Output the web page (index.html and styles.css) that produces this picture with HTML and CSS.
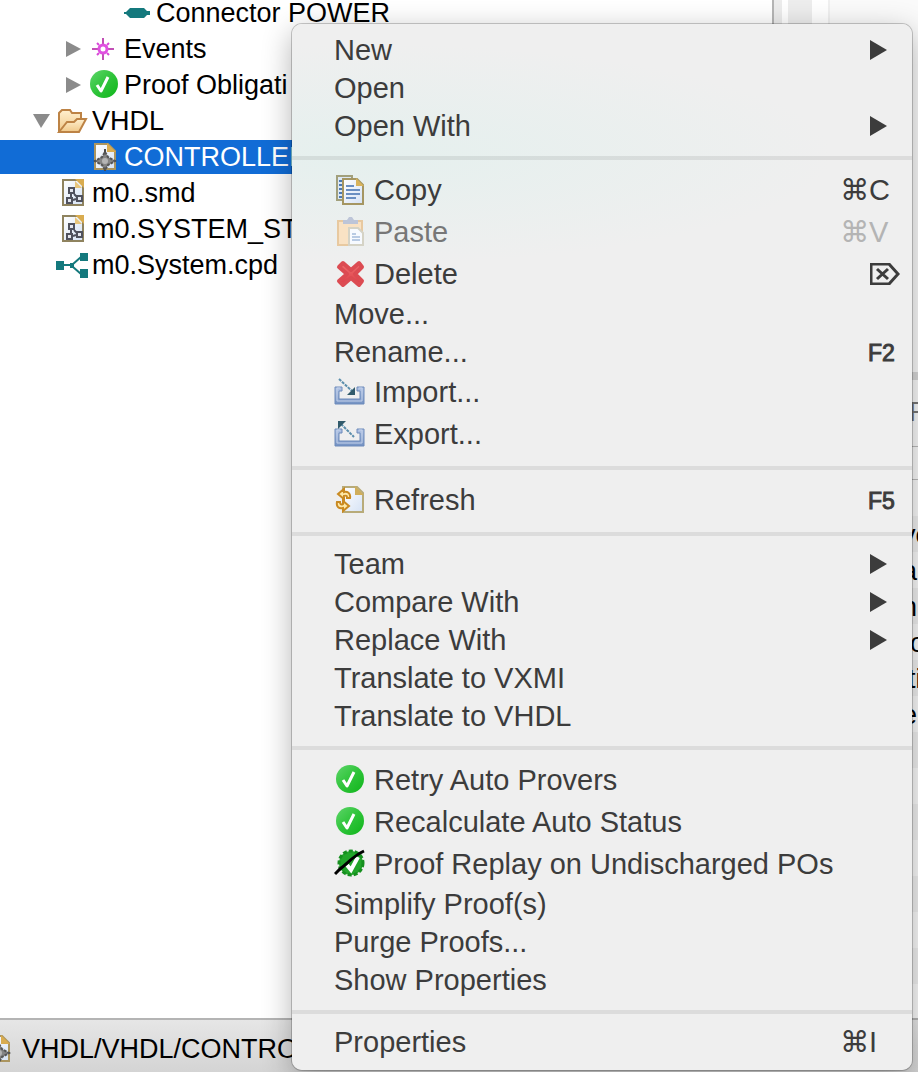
FILE: index.html
```
<!DOCTYPE html>
<html lang="en">
<head>
<meta charset="utf-8">
<title>Project explorer</title>
<link rel="stylesheet" href="styles.css">
</head>
<body>
<svg class="defs" aria-hidden="true">
  <defs>
    <linearGradient id="green" x1="0" y1="0" x2="1" y2="1"><stop offset="0" stop-color="#5ed56a"/><stop offset=".5" stop-color="#2fc43a"/><stop offset="1" stop-color="#0fb51a"/></linearGradient>
    <linearGradient id="folder" x1="0" y1="0" x2="0" y2="1"><stop offset="0" stop-color="#fff0cf"/><stop offset="1" stop-color="#f0c888"/></linearGradient>
    <linearGradient id="paper" x1="0" y1="0" x2="1" y2="1"><stop offset="0" stop-color="#fff"/><stop offset="1" stop-color="#d5e2f5"/></linearGradient>
    <linearGradient id="tray" x1="0" y1="0" x2="0" y2="1"><stop offset="0" stop-color="#b4c6e6"/><stop offset="1" stop-color="#7391c2"/></linearGradient>
    <linearGradient id="red" x1="0" y1="0" x2="0" y2="1"><stop offset="0" stop-color="#f07070"/><stop offset="1" stop-color="#dc3c46"/></linearGradient>
  </defs>
  <symbol id="check" viewBox="0 0 32 32"><circle cx="16" cy="15" r="14" fill="url(#green)"/><path d="M9 16l4 6 7-14" fill="none" stroke="#fff" stroke-width="3" stroke-linejoin="round"/></symbol>
  <symbol id="page" viewBox="0 0 32 32"><path d="M7 3h13l7 7v18H7z" fill="url(#paper)" stroke="#ab955f" stroke-width="2"/><path d="M19 2v9h9z" fill="#d9ac50"/></symbol>
  <symbol id="chip" viewBox="0 0 32 32"><path d="M7 3h13l7 7v18H7z" fill="url(#paper)" stroke="#ab955f" stroke-width="2"/><path d="M19 2v9h9z" fill="#d9ac50"/><path d="M17 8v22M6 20h22" stroke="#4b4b4b" stroke-width="2"/><path d="M17 11l3 5 7 4-7 4-3 5-3-5-7-4 7-4z" fill="#858585" stroke="#555" stroke-width="2" stroke-dasharray="3 1"/><circle cx="17" cy="20" r="3" fill="#b5b5b5"/></symbol>
  <symbol id="diagram" viewBox="0 0 32 32"><path d="M7 3h20v25H7z" fill="url(#paper)" stroke="#8f835f" stroke-width="2"/><path d="M19 2h9v9z" fill="#d9ac50"/><path d="M19 4v7h7z" fill="#e9c67c"/><g fill="#e4e6ee" stroke="#50525e" stroke-width="2"><rect x="13" y="11" width="5" height="5"/><rect x="11" y="21" width="5" height="5"/><rect x="21" y="19" width="5" height="5"/></g><path d="M15 17v3M18 17l3 3M17 23l3-1" stroke="#50525e" stroke-width="2"/></symbol>
</svg>

<main class="workbench">
  <section class="explorer" aria-label="Project explorer">
    <ul class="tree">
      <li class="node lv4"><svg class="icon" viewBox="0 0 32 32"><path d="M4 15h2l4-4h14l3 3h3v4h-3l-3 3H10l-4-4H4z" fill="#14797d"/></svg>Connector POWER</li>
      <li class="node lv3"><svg class="twist" viewBox="0 0 16 16"><path d="M2 0v16l15-8z"/></svg><svg class="icon" viewBox="0 0 32 32"><g stroke="#c24fb6" stroke-width="2" fill="none"><path d="M15 5v22M4 16h22"/><path d="M9 10l2 2M21 10l-2 2M9 22l2-2M21 22l-2-2" stroke="#d848d8"/><circle cx="15" cy="16" r="4" stroke="#e050e0" stroke-width="3" fill="#fff"/></g></svg>Events</li>
      <li class="node lv3"><svg class="twist" viewBox="0 0 16 16"><path d="M2 0v16l15-8z"/></svg><svg class="icon"><use href="#check"/></svg>Proof Obligati</li>
      <li class="node lv2"><svg class="twist" viewBox="0 0 16 16"><path d="M1 1h17L9 15z"/></svg><svg class="icon" viewBox="0 0 32 32"><path d="M3 27V8l3-3h8l2 3h9v6" fill="url(#folder)" stroke="#bd8345" stroke-width="2"/><path d="M3 27l8-10h7l3-3h9l-7 13z" fill="url(#folder)" stroke="#bd8345" stroke-width="2"/></svg>VHDL</li>
      <li class="node lv3 selected"><span class="twist"></span><svg class="icon"><use href="#chip"/></svg>CONTROLLER</li>
      <li class="node lv2"><span class="twist"></span><svg class="icon"><use href="#diagram"/></svg>m0..smd</li>
      <li class="node lv2"><span class="twist"></span><svg class="icon"><use href="#diagram"/></svg>m0.SYSTEM_STA</li>
      <li class="node lv2"><span class="twist"></span><svg class="icon" viewBox="0 0 32 32"><g fill="#14797d"><path d="M0 12h8v9H0zM24 4h8v8h-8zM24 20h8v9h-8zM14 14h4v5h-4z"/><path d="M8 16h7M17 15l8-7M17 18l8 7" stroke="#14797d" stroke-width="2"/></g></svg>m0.System.cpd</li>
    </ul>
  </section>
  <div class="sash"></div>
  <section class="editor" aria-label="Editor">
    <div class="blank"></div>
    <div class="tabs">P</div>
    <div class="toolbar"></div>
    <ul class="table">
      <li>ve</li><li>al</li><li>n</li><li class="in">o</li><li class="out">ti</li><li>e</li><li></li><li></li><li></li><li></li><li></li><li></li><li></li><li></li>
    </ul>
  </section>
</main>

<footer class="status"><svg class="icon"><use href="#chip"/></svg><span>VHDL/VHDL/CONTRO</span></footer>

<nav class="menu" aria-label="Context menu">
  <button class="item">New<svg class="arrow" viewBox="0 0 18 20"><path d="M0 0v20l17-10z"/></svg></button>
  <button class="item">Open</button>
  <button class="item">Open With<svg class="arrow" viewBox="0 0 18 20"><path d="M0 0v20l17-10z"/></svg></button>
  <hr>
  <button class="item tall"><svg class="icon" viewBox="0 0 32 32"><path d="M3 2h15v24H3z" fill="#dce8f5" stroke="#a2a07c" stroke-width="2"/><path d="M5 7h4M5 11h4M5 15h4M5 19h4M5 23h4" stroke="#4c79b4" stroke-width="2"/><path d="M9 5h14l6 6v19H9z" fill="url(#paper)" stroke="#a59662" stroke-width="2"/><path d="M22 4v8h8z" fill="#d8b35c"/><path d="M12 12h8M12 16h14M12 20h14M12 24h10" stroke="#6a8fc2" stroke-width="2"/></svg>Copy<kbd class="cmd">⌘C</kbd></button>
  <button class="item tall" disabled><svg class="icon" viewBox="0 0 32 32"><path d="M4 5h24v24H4z" fill="#f9e2c4" stroke="#e8c9a0" stroke-width="2"/><path d="M9 8V4h4l2-3h3l2 3h4v4z" fill="#bdc5d8"/><path d="M15 12h9l5 5v12H15z" fill="#f7faff" stroke="#d5d3c6" stroke-width="2"/><path d="M18 18h4M18 21h8M18 24h8" stroke="#b9cbe4" stroke-width="2"/></svg>Paste<kbd class="cmd">⌘V</kbd></button>
  <button class="item tall"><svg class="icon" viewBox="0 0 32 32"><path d="M9 5l8 7 8-7 3 4-7 7 7 7-3 4-8-7-8 7-4-4 8-7-8-7z" fill="url(#red)" stroke="#dc4b52" stroke-width="4" stroke-linejoin="round"/></svg>Delete<svg class="del" viewBox="0 0 30 22" role="img" aria-label="Forward delete"><path d="M1 1h18l9 10-9 10H1zM7 6l11 10M18 6L7 16"/></svg></button>
  <button class="item">Move...</button>
  <button class="item">Rename...<kbd class="fn">F2</kbd></button>
  <button class="item tall"><svg class="icon" viewBox="0 0 32 32"><path d="M1 11h7v4H5v8h21v-8h-3v-4h7v17H1z" fill="url(#tray)" stroke="#6c8aba" stroke-width="1"/><path d="M3 12h3M25 12h3M3 12v13h25V12" fill="none" stroke="#c3d1ea" stroke-width="1"/><path d="M5 3l13 12" stroke="#5b8eac" stroke-width="2" stroke-dasharray="3 1"/><path d="M21 11v8h-8z" fill="#315a6b"/></svg>Import...</button>
  <button class="item tall"><svg class="icon" viewBox="0 0 32 32"><path d="M1 11h7v4H5v8h21v-8h-3v-4h7v17H1z" fill="url(#tray)" stroke="#6c8aba" stroke-width="1"/><path d="M3 12h3M25 12h3M3 12v13h25V12" fill="none" stroke="#c3d1ea" stroke-width="1"/><path d="M7 6l13 13" stroke="#5b8eac" stroke-width="2" stroke-dasharray="3 1"/><path d="M4 3h8l-8 8z" fill="#315a6b"/></svg>Export...</button>
  <hr>
  <button class="item tall"><svg class="icon" viewBox="0 0 32 32"><path d="M9 3h14l6 6v19H9z" fill="url(#paper)" stroke="#b8ab79" stroke-width="2"/><path d="M21 2v9h9z" fill="#d0ae5c"/><path d="M16 14c1-5-3-7-6-6V5l-6 5 6 5v-3c3-1 3 0 3 2zM3 18c-1 5 2 7 6 6v3l6-5-6-5v3c-2 1-3 0-3-2z" fill="#ffe9a8" stroke="#c98a22" stroke-width="2"/></svg>Refresh<kbd class="fn">F5</kbd></button>
  <hr>
  <button class="item">Team<svg class="arrow" viewBox="0 0 18 20"><path d="M0 0v20l17-10z"/></svg></button>
  <button class="item">Compare With<svg class="arrow" viewBox="0 0 18 20"><path d="M0 0v20l17-10z"/></svg></button>
  <button class="item">Replace With<svg class="arrow" viewBox="0 0 18 20"><path d="M0 0v20l17-10z"/></svg></button>
  <button class="item">Translate to VXMI</button>
  <button class="item">Translate to VHDL</button>
  <hr>
  <button class="item tall"><svg class="icon"><use href="#check"/></svg>Retry Auto Provers</button>
  <button class="item tall"><svg class="icon"><use href="#check"/></svg>Recalculate Auto Status</button>
  <button class="item tall"><svg class="icon" viewBox="0 0 32 32"><circle cx="17" cy="15" r="12" fill="#22a52a"/><circle cx="17" cy="15" r="12" fill="none" stroke="#168f1f" stroke-width="3" stroke-dasharray="4 2"/><path d="M13 17l4 5 7-13" fill="none" stroke="#fff" stroke-width="4"/><path d="M1 26l5-5C14 15 19 8 30 3" fill="none" stroke="#000" stroke-width="3"/></svg>Proof Replay on Undischarged POs</button>
  <button class="item">Simplify Proof(s)</button>
  <button class="item">Purge Proofs...</button>
  <button class="item">Show Properties</button>
  <hr>
  <button class="item">Properties<kbd class="cmd">⌘I</kbd></button>
</nav>
</body>
</html>
```
FILE: styles.css
```
* { box-sizing: border-box; }
body {
  margin: 0;
  height: 100vh;
  display: flex;
  flex-direction: column;
  overflow: hidden;
  position: relative;
  background: #fff;
  color: #000;
  font: 27px/36px "Liberation Sans", Arial, sans-serif;
}
.defs { position: absolute; width: 0; height: 0; }
.icon { width: 32px; height: 32px; flex: none; }
ul { list-style: none; margin: 0; padding: 0; }

.workbench { flex: 1; min-height: 0; display: flex; overflow: hidden; }
.explorer { flex: 1; min-width: 0; overflow: hidden; }
.tree { margin-top: -5px; }
.node { display: flex; align-items: center; height: 36px; white-space: nowrap; }
.node .icon { margin-right: 4px; }
.twist { width: 16px; height: 16px; margin-right: 8px; flex: none; fill: #8b8b8b; overflow: visible; }
.lv2 { padding-left: 32px; }
.lv3 { padding-left: 64px; }
.lv4 { padding-left: 120px; }
.selected { height: 34px; margin: 1px 0; color: #fff; background: #116cd6; }

.sash {
  width: 58px;
  border-left: 2px solid #b5b5b5;
  background: linear-gradient(90deg, #ececec 8px, #fff 8px, #fff 14px, #ededed 14px, #ededed 38px, #fff 38px, #fff 54px, #f0f0f0 54px);
}
.editor { width: 88px; display: flex; flex-direction: column; background: #fafafa; overflow: hidden; white-space: nowrap; }
.blank { height: 380px; flex: none; border-bottom: 8px solid #d8d8d8; }
.tabs { height: 67px; flex: none; padding: 14px 0 0 79px; color: #777; border-bottom: 1px solid #bbb; }
.toolbar { height: 33px; flex: none; border-bottom: 1px solid #bbb; }
.table { margin-top: 36px; }
.table li { height: 36px; padding: 1px 0 0 72px; }
.table .in { padding-left: 80px; }
.table .out { padding-left: 78px; }
.table li:nth-child(odd) { background: #f0f0f0; }

.status {
  display: flex;
  align-items: center;
  gap: 8px;
  height: 54px;
  margin-left: -18px;
  padding-top: 6px;
  border-top: 2px solid #b4b4b4;
  background: linear-gradient(#e6e6e6, #d4d4d4);
  white-space: nowrap;
}

/* The context menu floats over the workbench. */
.menu {
  position: absolute;
  top: 24px;
  left: 292px;
  right: 6px;
  display: flex;
  flex-direction: column;
  padding: 7px 0 9px;
  border-radius: 10px;
  background: radial-gradient(ellipse 460px 110px at 80px 130px, #e5f0ee, #efefef);
  box-shadow: 0 0 0 1px rgba(0, 0, 0, .2), 0 8px 30px rgba(0, 0, 0, .3);
}
.item {
  display: flex;
  align-items: center;
  height: 38px;
  margin: 0;
  padding: 0 24px 0 42px;
  border: 0;
  background: none;
  color: #3c3c3c;
  font: 29px/38px "Liberation Sans", Arial, sans-serif;
  text-align: left;
  white-space: nowrap;
}
.item.tall { height: 42px; }
.item .icon { margin-right: 8px; }
.item:disabled { color: #777; }
.item:disabled kbd { color: #b4b4b4; }
.menu hr { width: 100%; height: 4px; margin: 11px 0 9px; border: 0; background: rgba(0, 0, 0, .08); }
.arrow { width: 18px; height: 20px; margin-left: auto; fill: #3c3c3c; }
.del { width: 30px; height: 22px; margin: 0 -12px 0 auto; fill: none; stroke: #3c3c3c; stroke-width: 3; }
kbd { margin-left: auto; font-family: "Liberation Sans", "DejaVu Sans", sans-serif; }
.cmd { width: 48px; }
.fn { width: 28px; margin-right: -8px; padding-top: 2px; font-size: 24px; -webkit-text-stroke: 1px #3c3c3c; font-size: 23px; }
```
